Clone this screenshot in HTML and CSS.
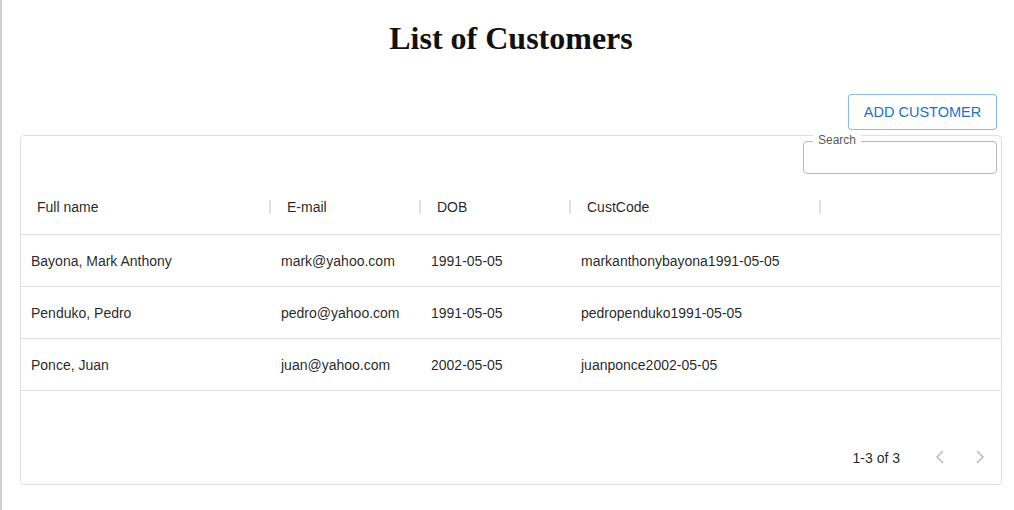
FILE: index.html
```html
<!DOCTYPE html>
<html>
<head>
<meta charset="utf-8">
<link rel="stylesheet" href="styles.css">
</head>
<body>
<div class="page">
  <h1 class="title">List of Customers</h1>
  <div class="actions">
    <button class="btn-outline">ADD CUSTOMER</button>
  </div>
  <div class="card">
    <div class="toolbar">
      <div class="search">
        <span class="search-label">Search</span>
      </div>
    </div>
    <div class="row header">
      <div class="cell c1">Full name<span class="sep"></span></div>
      <div class="cell c2">E-mail<span class="sep"></span></div>
      <div class="cell c3">DOB<span class="sep"></span></div>
      <div class="cell c4">CustCode<span class="sep"></span></div>
    </div>
    <div class="row">
      <div class="cell c1">Bayona, Mark Anthony</div>
      <div class="cell c2">mark@yahoo.com</div>
      <div class="cell c3">1991-05-05</div>
      <div class="cell c4">markanthonybayona1991-05-05</div>
    </div>
    <div class="row">
      <div class="cell c1">Penduko, Pedro</div>
      <div class="cell c2">pedro@yahoo.com</div>
      <div class="cell c3">1991-05-05</div>
      <div class="cell c4">pedropenduko1991-05-05</div>
    </div>
    <div class="row">
      <div class="cell c1">Ponce, Juan</div>
      <div class="cell c2">juan@yahoo.com</div>
      <div class="cell c3">2002-05-05</div>
      <div class="cell c4">juanponce2002-05-05</div>
    </div>
    <div class="filler"></div>
    <div class="footer">
      <span class="count">1-3 of 3</span>
      <span class="pager">
        <svg width="40" height="40" viewBox="0 0 40 40"><polyline points="23,13 17,19 23,25" fill="none" stroke="#bdbdbd" stroke-width="1.6"/></svg>
        <svg width="40" height="40" viewBox="0 0 40 40"><polyline points="17,13 23,19 17,25" fill="none" stroke="#bdbdbd" stroke-width="1.6"/></svg>
      </span>
    </div>
  </div>
</div>
</body>
</html>
```
FILE: styles.css
```css
html, body {
  margin: 0;
  padding: 0;
  background: #fff;
}
body {
  border-left: 2px solid #cfcfcf;
  min-height: 510px;
  box-sizing: border-box;
  font-family: "Liberation Sans", Arial, sans-serif;
  color: rgba(0,0,0,0.87);
}
.page {
  margin-left: 18px;
  width: 982px;
}
.title {
  font-family: "Liberation Serif", "Times New Roman", serif;
  font-size: 32px;
  font-weight: bold;
  text-align: center;
  margin: 20px 0 0;
  color: #111;
}
.actions {
  display: flex;
  justify-content: flex-end;
  margin-top: 37px;
  padding-right: 5px;
}
.btn-outline {
  height: 36px;
  width: 149px;
  box-sizing: border-box;
  border: 1px solid rgba(25,118,210,0.5);
  border-radius: 4px;
  background: #fff;
  color: #1872d0;
  font-family: "Liberation Sans", Arial, sans-serif;
  font-size: 14.5px;
  padding: 0;
}
.card {
  margin-top: 5px;
  border: 1px solid #e0e0e0;
  border-radius: 4px;
  height: 350px;
  box-sizing: border-box;
  display: flex;
  flex-direction: column;
}
.toolbar {
  display: flex;
  justify-content: flex-end;
  padding: 5px 4px 0 0;
  height: 43px;
  box-sizing: border-box;
  flex: none;
}
.search {
  position: relative;
  width: 194px;
  height: 33px;
  box-sizing: border-box;
  border: 1px solid #b5b5b5;
  border-radius: 4px;
}
.search-label {
  position: absolute;
  left: 9px;
  top: -9px;
  background: #fff;
  padding: 0 5px;
  font-size: 12px;
  color: rgba(0,0,0,0.7);
  line-height: 14px;
}
.row {
  display: flex;
  height: 52px;
  box-sizing: border-box;
  flex: none;
  border-bottom: 1px solid #e0e0e0;
  align-items: center;
  font-size: 14px;
}
.row.header {
  height: 56px;
}
.cell {
  position: relative;
  box-sizing: border-box;
  padding-left: 10px;
  height: 100%;
  display: flex;
  align-items: center;
  white-space: nowrap;
}
.header .cell {
  padding-left: 16px;
}
.c1 { width: 250px; }
.c2 { width: 150px; }
.c3 { width: 150px; }
.c4 { width: 250px; }
.sep {
  position: absolute;
  right: 0;
  top: 50%;
  width: 2px;
  height: 14px;
  margin-top: -7px;
  background: #e0e0e0;
}
.filler {
  flex: 1;
}
.footer {
  height: 52px;
  flex: none;
  display: flex;
  align-items: center;
  justify-content: flex-end;
  padding-right: 1px;
  font-size: 14px;
}
.count {
  margin-right: 20px;
}
.pager {
  display: flex;
}
.pager svg {
  display: block;
}
```
